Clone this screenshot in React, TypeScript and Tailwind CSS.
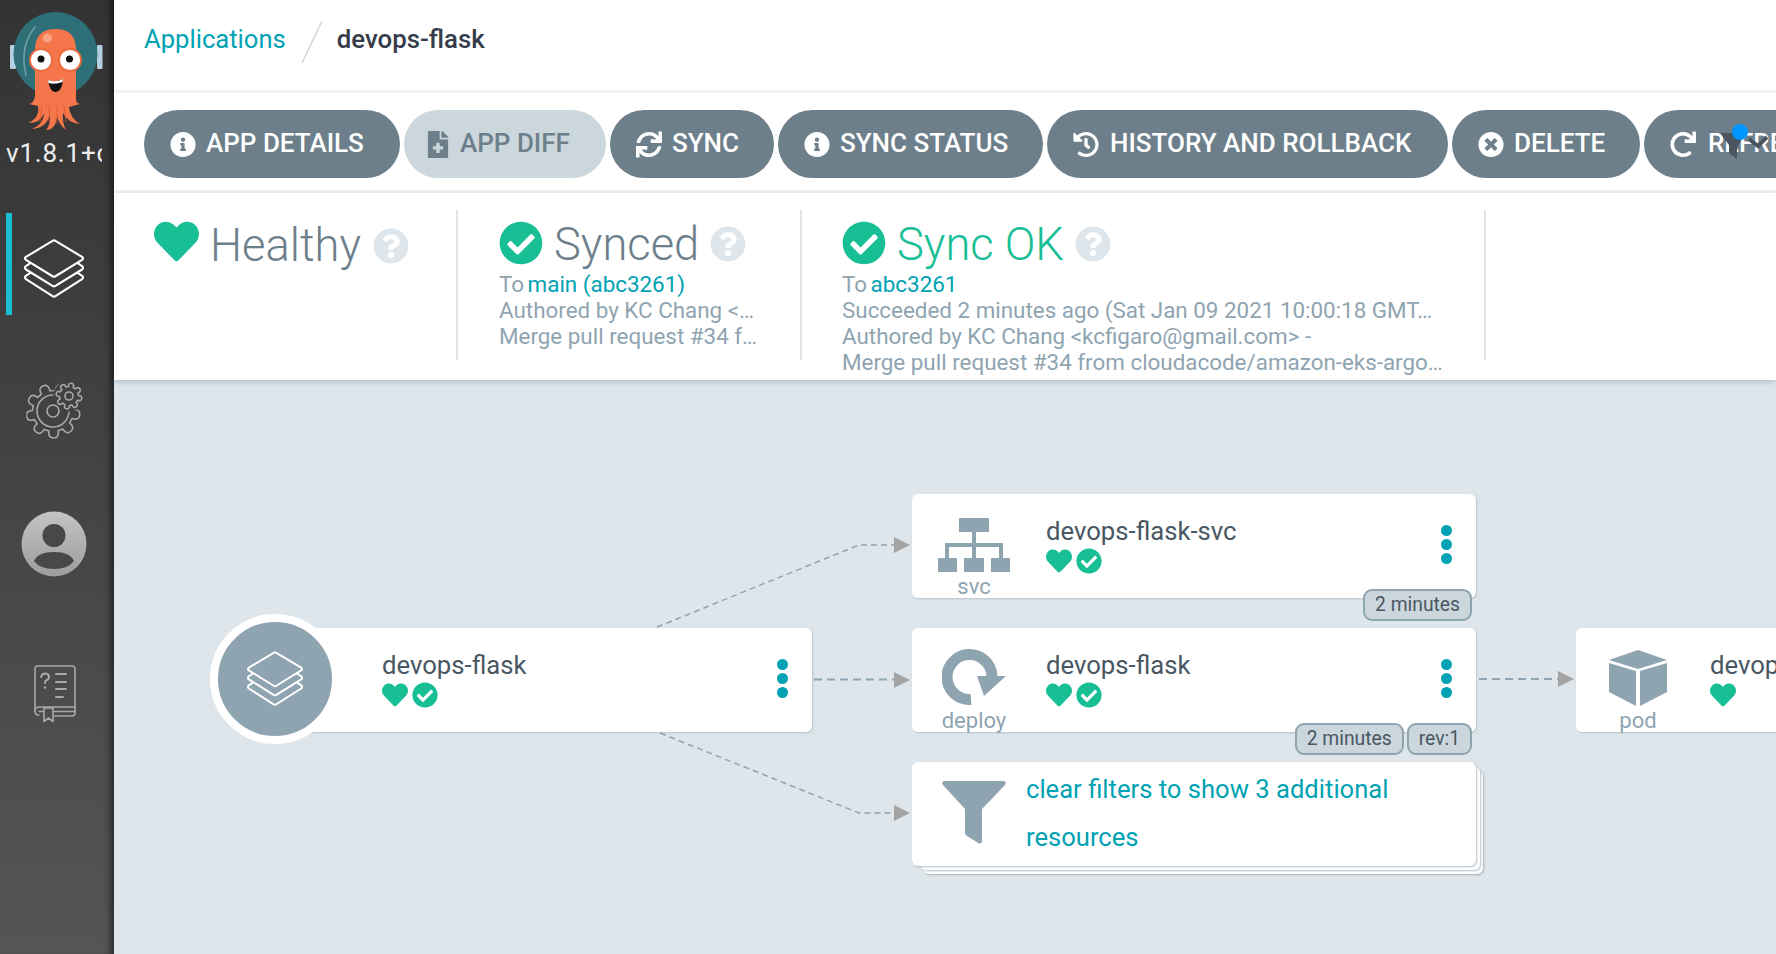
import React from "react";
import { FaHeart, FaCheckCircle, FaQuestionCircle, FaInfoCircle, FaFileMedical, FaSync, FaHistory, FaTimesCircle, FaRedo } from "react-icons/fa";

const font = { fontFamily: "Roboto, sans-serif" };

function Layers({ className }: { className?: string }) {
  return (
    <svg viewBox="0 0 64 62" className={className} fill="none" stroke="currentColor" strokeWidth="2.2" strokeLinejoin="round" strokeLinecap="round">
      <path d="M30.5 2 Q32 1 33.5 2 L61 18.5 Q63 20 61 21.500 L33.500 38.500 Q32 39.500 30.500 38.500 L3 21.500 Q1 20 3 18.500 Z" />
      <path d="M7.500 25 L3 28 Q1 30 3 31.500 L30.500 48.500 Q32 49.500 33.500 48.500 L61 31.500 Q63 30 61 28 L56.500 25" />
      <path d="M7.500 35 L3 38 Q1 40 3 41.500 L30.500 59 Q32 60 33.500 59 L61 41.500 Q63 40 61 38 L56.500 35" />
    </svg>
  );
}

function gearPath(cx: number, cy: number, outer: number, inner: number, teeth: number, rot = 0) {
  let d = "";
  const step = (Math.PI * 2) / teeth;
  for (let i = 0; i < teeth; i++) {
    const a = rot + i * step;
    const p = (r: number, o: number) => `${(cx + r * Math.cos(a + o * step)).toFixed(2)} ${(cy + r * Math.sin(a + o * step)).toFixed(2)}`;
    d += `${i === 0 ? "M" : "L"}${p(inner, -0.32)} Q${p(outer * 1.02, -0.3)} ${p(outer, 0)} Q${p(outer * 1.02, 0.3)} ${p(inner, 0.32)} `;
  }
  return d + "Z";
}

function Logo() {
  return (
    <svg viewBox="0 0 114 135" className="w-[114px] h-[135px] shrink-0">
      <rect x="10" y="45" width="6" height="24" rx="1" fill="#b5cfe3" />
      <rect x="97" y="45" width="5.500" height="24" rx="1" fill="#b5cfe3" />
      <circle cx="55.500" cy="54" r="42" fill="#2e6f78" />
      <path d="M35 27 Q19 47 26 75" fill="none" stroke="#6f9ea5" strokeWidth="1.600" strokeLinecap="round" />
      <path d="M35 50 Q35 29 55.500 29 Q76 29 76 50 L76 102 L35 102 Z" fill="#f4764a" />
      <path d="M35 96 Q34 103 29 104 L38 106 Q40 118 28 123 Q41 123 44 113 Q44 124 32 129 Q46 128 50 115 Q51 124 46 130 Q56 130 57 116 Q59 125 66 130 Q62 122 63 113 Q68 123 80 124 Q70 118 69 107 L80 104 Q75 103 76 96 Z" fill="#f4764a" />
      <path d="M42 106 L40 122 M49 106 L49 122 M57 106 L57 124 M64 106 L66 122" stroke="#e0592b" strokeWidth="0.800" fill="none" />
      <circle cx="47.500" cy="38" r="4.500" fill="#f8a283" />
      <circle cx="41" cy="60" r="11" fill="#fff" stroke="#ee6a3e" strokeWidth="1.800" />
      <circle cx="70" cy="60" r="11" fill="#fff" stroke="#ee6a3e" strokeWidth="1.800" />
      <circle cx="41" cy="59" r="3.500" fill="#111" />
      <circle cx="69.500" cy="59" r="3.500" fill="#111" />
      <path d="M48 80 Q56 83 63 79 Q62 92 55 92 Q50 92 48 80 Z" fill="#111" />
      <path d="M48 80 Q56 83 63 79 L62.500 82 Q55 85 48.500 83 Z" fill="#fff" />
    </svg>
  );
}

function GearIcon() {
  return (
    <svg viewBox="0 0 60 60" className="w-[60px] h-[60px]" fill="none" stroke="#a8a8a8" strokeWidth="1.600" strokeLinejoin="round">
      <mask id="gm">
        <rect width="60" height="60" fill="#fff" />
        <circle cx="43" cy="15" r="16" fill="#000" />
      </mask>
      <g mask="url(#gm)">
        <path d={gearPath(27, 30, 27, 20.500, 9, 0.15)} />
        <circle cx="27" cy="30" r="16" />
      </g>
      <circle cx="27" cy="30" r="6" />
      <path d={gearPath(43, 15, 13, 9.500, 8, 0.2)} />
      <circle cx="43" cy="15" r="4" />
    </svg>
  );
}

function UserIcon() {
  return (
    <svg viewBox="0 0 66 66" className="w-[66px] h-[66px]">
      <defs>
        <linearGradient id="ug" x1="0" y1="0" x2="0" y2="1">
          <stop offset="0" stopColor="#c4c4c4" />
          <stop offset="1" stopColor="#9c9c9c" />
        </linearGradient>
      </defs>
      <circle cx="33" cy="33" r="32.500" fill="url(#ug)" />
      <circle cx="33" cy="24.500" r="11.500" fill="#484848" />
      <path d="M13 50 Q17 41 33 41 Q49 41 53 50 Q47 58 33 58 Q19 58 13 50 Z" fill="#484848" />
    </svg>
  );
}

function BookIcon() {
  return (
    <svg viewBox="0 0 42 58" className="w-[42px] h-[58px]" fill="none" stroke="#a8a8a8" strokeWidth="1.600" strokeLinecap="round" strokeLinejoin="round">
      <path d="M5 50 H3 Q1 49 1 46 V4 Q1 1 4 1 H38 Q41 1 41 4 V48 Q41 51 38 51 H20" />
      <path d="M1 46 Q1 42 5 42 H41" />
      <path d="M5 46.500 H9 M20 46.500 H41" />
      <path d="M10 43 H19 V56.500 L14.500 53 L10 56.500 Z" />
      <path d="M7 12 Q8 8.500 11 8.500 Q15 8.500 15 12 Q15 14.500 12 15.500 Q11 16 11 18" strokeWidth="2" />
      <circle cx="11" cy="22.500" r="1.300" fill="#a8a8a8" stroke="none" />
      <path d="M22 9 H32 M22 17 H32 M22 24 H32 M22 32 H29" strokeWidth="2" />
    </svg>
  );
}

function Btn({ w, icon, label, off, layout = "pl-[26px] gap-[10px]", slot = "w-[26px]" }: { w: string; icon: React.ReactNode; label: string; off?: boolean; layout?: string; slot?: string }) {
  return (
    <div className={`${w} h-[68px] rounded-[34px] shrink-0 flex items-center ${layout} text-[26px] font-medium ${off ? "bg-[#ccd6dd] text-[#6d7f8b]" : "bg-[#6d7f8b] text-white"}`}>
      <span className={`${slot} flex justify-center text-[27px]`}>{icon}</span>
      <span className="whitespace-nowrap -mt-[2px]">{label}</span>
    </div>
  );
}

function Dots({ className }: { className: string }) {
  return (
    <div className={`absolute flex flex-col gap-[3px] ${className}`}>
      <div className="w-[11px] h-[11px] rounded-full bg-[#00a2b3]" />
      <div className="w-[11px] h-[11px] rounded-full bg-[#00a2b3]" />
      <div className="w-[11px] h-[11px] rounded-full bg-[#00a2b3]" />
    </div>
  );
}

function Status({ check = true }: { check?: boolean }) {
  return (
    <div className="flex items-center gap-[4px] text-[#18be94] h-[26px] mt-[1px]">
      <FaHeart className="w-[26px] h-[26px]" />
      {check && <FaCheckCircle className="w-[26px] h-[26px]" />}
    </div>
  );
}

function Badge({ children }: { children: React.ReactNode }) {
  return (
    <div className="h-[32px] px-[10px] flex items-center rounded-[9px] border-2 border-[#8fa4b1] bg-[#ccd6dd] text-[#495763] text-[19.3px] whitespace-nowrap">{children}</div>
  );
}

function Node({ className, icon, kind, title, check = true, dots = true, badges }: { className: string; icon: React.ReactNode; kind: string; title: string; check?: boolean; dots?: boolean; badges?: string[] }) {
  return (
    <div className={`absolute h-[104px] bg-white rounded-[6px] shadow-[1px_1px_2px_rgba(110,130,145,0.35)] ${className}`}>
      <div className="absolute left-0 top-0 w-[124px] h-full flex flex-col items-center">
        <div className="h-[78px] flex items-end">{icon}</div>
        <div className="text-[#8fa4b1] text-[22px] leading-[22px] mt-[4px]">{kind}</div>
      </div>
      <div className="absolute left-[134px] top-[21px]">
        <div className="text-[25.7px] leading-[32px] text-[#495763] whitespace-nowrap">{title}</div>
        <Status check={check} />
      </div>
      {dots && <Dots className="left-[529px] top-[31px]" />}
      {badges && (
        <div className="absolute right-[4px] top-[95px] flex gap-[3px]">
          {badges.map((b) => (
            <Badge key={b}>{b}</Badge>
          ))}
        </div>
      )}
    </div>
  );
}

function Edges() {
  const dash = { stroke: "#8fa4b1", strokeWidth: 1.500, fill: "none", strokeDasharray: "6 4" };
  return (
    <svg className="absolute left-0 top-0 w-[1662px] h-[574px]" viewBox="114 380 1662 574">
      <path d="M657 627 L859 545 L895 545" {...dash} />
      <path d="M814 679.500 L895 679.500" {...dash} strokeWidth="2" strokeDasharray="8 5" />
      <path d="M660 733 L859 813 L895 813" {...dash} />
      <path d="M1479 679 L1560 679" {...dash} strokeWidth="2" strokeDasharray="8 5" />
      <polygon points="894,537 910,545 894,553" fill="#a3a3a3" />
      <polygon points="894,672 910,680 894,688" fill="#a3a3a3" />
      <polygon points="894,805 910,813 894,821" fill="#a3a3a3" />
      <polygon points="1558,671 1574,679 1558,687" fill="#a3a3a3" />
    </svg>
  );
}

function SvcIcon() {
  return (
    <svg viewBox="0 0 72 54" className="w-[72px] h-[54px]" fill="#8fa4b1">
      <rect x="21" y="0" width="30" height="14" />
      <rect x="0" y="40" width="19" height="14" />
      <rect x="26" y="40" width="20" height="14" />
      <rect x="53" y="40" width="19" height="14" />
      <path d="M34 14 H38 V25 H65 V40 H61 V29 H38 V40 H34 V29 H11 V40 H7 V25 H34 Z" />
    </svg>
  );
}

function DeployIcon() {
  return (
    <svg viewBox="0 0 64 57" className="w-[64px] h-[57px]">
      <path d="M29 50.500 A22.500 22.500 0 1 1 50 27" fill="none" stroke="#8fa4b1" strokeWidth="11" />
      <polygon points="35,27 64,27 42,47" fill="#8fa4b1" />
    </svg>
  );
}

function PodIcon() {
  return (
    <svg viewBox="0 0 58 56" className="w-[58px] h-[56px]" fill="#8fa4b1">
      <polygon points="29,0 58,10 29,19 0,10" />
      <polygon points="0,13 27,21 27,56 0,42" />
      <polygon points="31,21 58,13 58,42 31,56" />
    </svg>
  );
}

function FilterIcon() {
  return (
    <svg viewBox="0 0 64 64" className="w-[64px] h-[64px]" fill="#8fa4b1">
      <path d="M2 1 H62 Q65 2 63 5 L40 29 V61 Q40 64 37 63.500 L25 56 Q23 55 23 53 V29 L1 5 Q-1 2 2 1 Z" />
    </svg>
  );
}

function Help() {
  return <FaQuestionCircle className="w-[36px] h-[36px] text-[#dee6eb] shrink-0 mt-[1px]" />;
}

export default function App() {
  return (
    <div className="flex w-[1776px] h-[954px] overflow-hidden bg-[#dee6eb]" style={font}>
      <aside className="w-[114px] shrink-0 h-full flex flex-col bg-gradient-to-b from-[#333333] to-[#555555] shadow-[inset_-8px_0_7px_-5px_rgba(0,0,0,0.55)] relative z-10">
        <Logo />
        <div className="h-[80px] ml-[6px] w-[96px] overflow-hidden text-[26px] text-[#eeeeee] whitespace-nowrap leading-[36px] font-normal tracking-[0.8px]">v1.8.1+c</div>
        <div className="h-[102px] -mt-[2px] flex items-center justify-center relative text-white pr-[6px]">
          <div className="absolute left-[6px] top-0 bottom-0 w-[6px] bg-[#18bed4]" />
          <Layers className="w-[62px] h-[60px] mt-[9px]" />
        </div>
        <div className="mt-[66px] h-[60px] flex justify-center pr-[3px]">
          <GearIcon />
        </div>
        <div className="mt-[70px] h-[66px] flex justify-center pr-[6px]">
          <UserIcon />
        </div>
        <div className="mt-[88px] h-[58px] flex justify-center pr-[4px]">
          <BookIcon />
        </div>
      </aside>
      <main className="flex-1 min-w-0 flex flex-col relative">
        <header className="h-[90px] shrink-0 bg-white flex items-center pl-[30px] pb-[11px] relative">
          <span className="text-[25.600px] text-[#00a2b3]">Applications</span>
          <svg viewBox="0 0 22 44" className="w-[22px] h-[44px] ml-[15px] mr-[14px] mt-[5px]">
            <path d="M21 1 L1 43" stroke="#ccd6dd" strokeWidth="1.500" />
          </svg>
          <span className="text-[25.800px] text-[#363c4a] font-medium">devops-flask</span>
        </header>
        <div className="h-[103px] shrink-0 bg-white border-y-[3px] border-[#eff3f5] flex items-start pt-[17px] pl-[30px] gap-[4px] overflow-hidden">
          <Btn w="w-[256px]" icon={<FaInfoCircle />} label="APP DETAILS" />
          <Btn w="w-[202px]" icon={<FaFileMedical />} label="APP DIFF" layout="pl-[23px] gap-[11px]" slot="w-[22px]" off />
          <Btn w="w-[164px]" icon={<FaSync />} label="SYNC" />
          <Btn w="w-[265px]" icon={<FaInfoCircle />} label="SYNC STATUS" />
          <Btn w="w-[401px]" icon={<FaHistory />} label="HISTORY AND ROLLBACK" layout="pl-[26px] gap-[11px]" />
          <Btn w="w-[188px]" icon={<FaTimesCircle />} label="DELETE" />
          <Btn w="w-[200px]" icon={<FaRedo />} label="REFRESH" layout="pl-[26px] gap-[12px]" />
        </div>
        <section className="h-[187px] shrink-0 bg-white flex shadow-[0_2px_5px_rgba(110,130,145,0.4)] relative z-[1]">
          <div className="w-[344px] shrink-0 h-[150px] mt-[17px] border-r-2 border-[#dee6eb] pl-[40px]">
            <div className="flex items-center h-[64px] pt-[6px] gap-[12px]">
              <FaHeart className="w-[45px] h-[45px] text-[#18be94] -mt-[8px]" />
              <span className="text-[45.300px] text-[#6d7f8b] leading-[56px] font-light mt-[2px] -ml-[1px]">Healthy</span>
              <Help />
            </div>
          </div>
          <div className="w-[344px] shrink-0 h-[150px] mt-[17px] border-r-2 border-[#dee6eb] pl-[41px]">
            <div className="flex items-center h-[61px] pt-[6px] gap-[11px]">
              <FaCheckCircle className="w-[44px] h-[44px] text-[#18be94] -mt-[2px]" />
              <span className="text-[45.300px] text-[#6d7f8b] leading-[56px] font-light mt-[3px]">Synced</span>
              <Help />
            </div>
            <div className="text-[22.400px] leading-[26px] text-[#8fa4b1] whitespace-nowrap">
              <div>
                To <span className="text-[#00a2b3] -ml-[2px]">main (abc3261)</span>
              </div>
              <div>Authored by KC Chang &lt;…</div>
              <div>Merge pull request #34 f…</div>
            </div>
          </div>
          <div className="w-[684px] shrink-0 h-[150px] mt-[17px] border-r-2 border-[#dee6eb] pl-[40px]">
            <div className="flex items-center h-[61px] pt-[6px] gap-[11px]">
              <FaCheckCircle className="w-[44px] h-[44px] text-[#18be94] -mt-[2px]" />
              <span className="text-[45.300px] text-[#18be94] leading-[56px] font-light mt-[3px]">Sync OK</span>
              <Help />
            </div>
            <div className="text-[22.400px] leading-[26px] text-[#8fa4b1] whitespace-nowrap">
              <div>
                To <span className="text-[#00a2b3] -ml-[2px]">abc3261</span>
              </div>
              <div>Succeeded 2 minutes ago (Sat Jan 09 2021 10:00:18 GMT…</div>
              <div>Authored by KC Chang &lt;kcfigaro@gmail.com&gt; -</div>
              <div>Merge pull request #34 from cloudacode/amazon-eks-argo…</div>
            </div>
          </div>
        </section>
        <div className="flex-1 relative overflow-hidden">
          <Edges />
          {/* application node */}
          <div className="absolute left-[154px] top-[248px] w-[544px] h-[104px] bg-white rounded-[6px] shadow-[1px_1px_2px_rgba(110,130,145,0.35)]">
            <div className="absolute left-[114px] top-[21px]">
              <div className="text-[25.7px] leading-[32px] text-[#495763] whitespace-nowrap">devops-flask</div>
              <Status />
            </div>
            <Dots className="left-[509px] top-[31px]" />
          </div>
          <div className="absolute left-[96px] top-[234px] w-[130px] h-[130px] rounded-full border-8 border-white bg-[#8fa4b1] flex items-center justify-center text-white">
            <Layers className="w-[58px] h-[56px]" />
          </div>
          <Node className="left-[798px] top-[114px] w-[564px]" icon={<SvcIcon />} kind="svc" title="devops-flask-svc" badges={["2 minutes"]} />
          <Node className="left-[798px] top-[248px] w-[564px]" icon={<DeployIcon />} kind="deploy" title="devops-flask" badges={["2 minutes", "rev:1"]} />
          <Node className="left-[1462px] top-[248px] w-[300px]" icon={<PodIcon />} kind="pod" title="devops-flask-5c" check={false} dots={false} />
          {/* filtered stack */}
          <div className="absolute left-[809px] top-[390px] w-[560px] h-[104px] bg-white rounded-[6px] shadow-[1px_1px_2px_rgba(110,130,145,0.5)]" />
          <div className="absolute left-[806px] top-[386px] w-[560px] h-[104px] bg-white rounded-[6px] shadow-[1px_1px_2px_rgba(110,130,145,0.5)]" />
          <div className="absolute left-[798px] top-[382px] w-[564px] h-[104px] bg-white rounded-[6px] shadow-[1px_1px_2px_rgba(110,130,145,0.5)] flex">
            <div className="w-[114px] shrink-0 flex justify-center pt-[18px] pl-[10px]">
              <FilterIcon />
            </div>
            <div className="text-[25.600px] leading-[48px] text-[#00a2b3] pt-[3px] w-[420px]">clear filters to show 3 additional resources</div>
          </div>
        </div>
        <svg viewBox="0 0 60 32" className="absolute left-[1605px] top-[122px] w-[60px] h-[36px] pointer-events-none overflow-visible">
          <path d="M1 9 H26 L18 24 V35 L10 29 V21 Z" fill="#4a5560" />
          <path d="M30 15 L39 22 L48 13" fill="none" stroke="#4a5560" strokeWidth="4" />
          <circle cx="21" cy="8" r="8" fill="#0095ff" />
        </svg>
      </main>
    </div>
  );
}
